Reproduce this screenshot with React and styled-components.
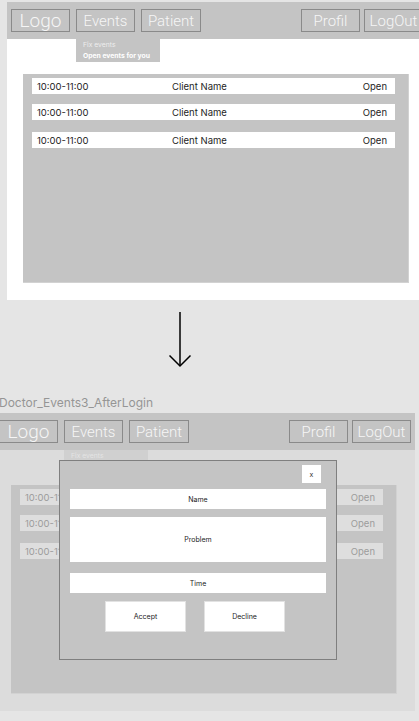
import React from 'react';
import styled, { createGlobalStyle } from 'styled-components';

const GlobalStyle = createGlobalStyle`
  html, body {
    margin: 0;
    padding: 0;
    background: #e5e5e5;
    overflow: hidden;
  }
  * { box-sizing: border-box; }
`;

const Canvas = styled.div`
  display: flex;
  flex-direction: column;
  padding-top: 2px;
  width: 419px;
  height: 721px;
  overflow: hidden;
  font-family: Inter, "Noto Sans", sans-serif;
`;

const Frame = styled.div`
  position: relative;
  flex: none;
  width: 420px;
  height: 298px;
  margin-left: ${(p) => p.$offset}px;
  background: ${(p) => (p.$dim ? '#dcdcdc' : '#ffffff')};
  display: flex;
  flex-direction: column;
`;

const NavBar = styled.div`
  height: 37px;
  background: #c4c4c4;
  display: flex;
  align-items: center;
  padding: 0 4px;
  gap: 6px;
`;

const NavGroup = styled.div`
  display: flex;
  gap: ${(p) => p.$gap}px;
  margin-left: ${(p) => (p.$right ? 'auto' : '0')};
`;

const NavButton = styled.div`
  width: ${(p) => p.$w || 59}px;
  height: 23px;
  border: 1px solid #8a8a8a;
  display: flex;
  align-items: center;
  justify-content: center;
  font-family: Roboto, "Liberation Sans", sans-serif;
  font-weight: 300;
  font-size: ${(p) => (p.$big ? 19 : 15)}px;
  color: #f6f6f6;
  white-space: nowrap;
`;

const Dropdown = styled.div`
  position: absolute;
  left: 69px;
  top: 37px;
  width: 84px;
  height: 23px;
  background: ${(p) => (p.$dim ? '#d0d0d0' : '#c4c4c4')};
  display: flex;
  flex-direction: column;
  justify-content: center;
  padding-left: 7px;
  gap: 3px;
  font-size: 6.8px;
  line-height: 8px;
  color: ${(p) => (p.$dim ? '#e4e4e4' : '#eeeeee')};
  white-space: nowrap;
`;

const DropItem = styled.span`
  font-weight: ${(p) => (p.$bold ? 700 : 400)};
  color: ${(p) => (p.$bold ? '#ffffff' : 'inherit')};
`;

const Panel = styled.div`
  margin: 35px 18px 0 16px;
  height: 209px;
  background: #c4c4c4;
  border-right: 1px solid #d2d2d2;
  border-bottom: 1px solid #d2d2d2;
  padding: 4px 13px 0 9px;
  display: flex;
  flex-direction: column;
`;

const Row = styled.div`
  height: 16px;
  margin-top: ${(p) => p.$top || 0}px;
  background: ${(p) => (p.$dim ? '#dedede' : '#ffffff')};
  display: grid;
  grid-template-columns: 135px 1fr auto;
  align-items: center;
  padding: 0 8px 0 5px;
  font-size: 9.5px;
  color: ${(p) => (p.$dim ? '#9c9c9c' : '#1e1e1e')};
`;

const ArrowWrap = styled.div`
  height: 95px;
  padding: 12px 0 0 168px;
`;

const Label = styled.div`
  height: 16px;
  margin: 0 0 2px -1px;
  font-size: 12px;
  line-height: 16px;
  color: #959595;
  white-space: nowrap;
`;

const Modal = styled.div`
  position: absolute;
  left: 64px;
  top: 47px;
  width: 278px;
  height: 200px;
  background: #c4c4c4;
  border: 1px solid #7f7f7f;
  padding: 4px 10px;
  display: flex;
  flex-direction: column;
`;

const ModalHead = styled.div`
  display: flex;
  justify-content: flex-end;
  padding-right: 5px;
`;

const CloseButton = styled.div`
  width: 19px;
  height: 18px;
  background: #ffffff;
  display: flex;
  align-items: center;
  justify-content: center;
  font-size: 7px;
  color: #333;
`;

const Field = styled.div`
  height: ${(p) => p.$h}px;
  margin-top: ${(p) => p.$top}px;
  background: #ffffff;
  display: flex;
  align-items: center;
  justify-content: center;
  font-size: 7px;
  color: #222;
`;

const ButtonRow = styled.div`
  margin-top: 8px;
  display: flex;
  justify-content: center;
  gap: 18px;
  padding-right: 6px;
`;

const ActionButton = styled.div`
  width: 81px;
  height: 31px;
  background: #ffffff;
  border: 1px solid #e2e2e2;
  display: flex;
  align-items: center;
  justify-content: center;
  font-size: 7px;
  color: #222;
`;

const rows = [
  { time: '10:00-11:00', name: 'Client Name', status: 'Open', top: 0 },
  { time: '10:00-11:00', name: 'Client Name', status: 'Open', top: 10 },
  { time: '10:00-11:00', name: 'Client Name', status: 'Open', top: 12 },
];

function Screen({ dim, offset, children }) {
  return (
    <Frame $dim={dim} $offset={offset}>
      <NavBar>
        <NavGroup $gap={6}>
          <NavButton $big>Logo</NavButton>
          <NavButton>Events</NavButton>
          <NavButton $w={60}>Patient</NavButton>
        </NavGroup>
        <NavGroup $right $gap={4}>
          <NavButton>Profil</NavButton>
          <NavButton>LogOut</NavButton>
        </NavGroup>
      </NavBar>
      <Dropdown $dim={dim}>
        <DropItem>Fix events</DropItem>
        <DropItem $bold>Open events for you</DropItem>
      </Dropdown>
      <Panel>
        {rows.map((r, i) => (
          <Row key={i} $top={r.top} $dim={dim}>
            <span>{r.time}</span>
            <span>{dim ? '' : r.name}</span>
            <span>{r.status}</span>
          </Row>
        ))}
      </Panel>
      {children}
    </Frame>
  );
}

export default function App() {
  return (
    <>
      <GlobalStyle />
      <Canvas>
        <Screen offset={7} />
        <ArrowWrap>
          <svg width="24" height="56" viewBox="0 0 24 56" fill="none">
            <path d="M12 0 V54" stroke="#000" strokeWidth="1.5" />
            <path d="M1.5 43.5 L12 54 L22.5 43.5" stroke="#000" strokeWidth="1.5" />
          </svg>
        </ArrowWrap>
        <Label>Doctor_Events3_AfterLogin</Label>
        <Screen dim offset={-5}>
          <Modal>
            <ModalHead>
              <CloseButton>x</CloseButton>
            </ModalHead>
            <Field $h={20} $top={6}>Name</Field>
            <Field $h={45} $top={8}>Problem</Field>
            <Field $h={20} $top={11}>Time</Field>
            <ButtonRow>
              <ActionButton>Accept</ActionButton>
              <ActionButton>Decline</ActionButton>
            </ButtonRow>
          </Modal>
        </Screen>
      </Canvas>
    </>
  );
}
